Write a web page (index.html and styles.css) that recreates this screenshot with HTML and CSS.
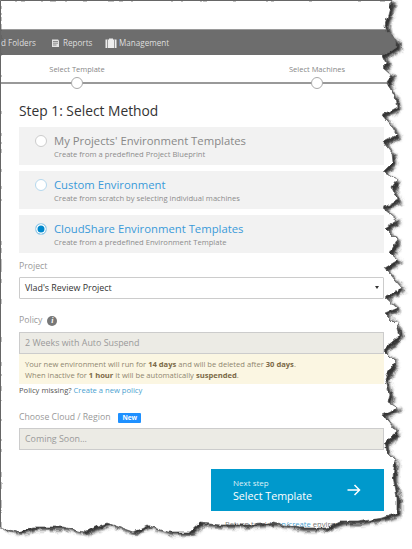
FILE: index.html
```html
<!DOCTYPE html>
<html lang="en">
<head>
<meta charset="utf-8">
<title>Select Method</title>
<link rel="stylesheet" href="styles.css">
</head>
<body>
<div class="page">
  <div class="topspace"></div>
  <nav class="nav">
    <span class="nav-item nav-first">d Folders</span>
    <span class="nav-item nav-reports">
      <svg class="ico" width="9" height="10" viewBox="0 0 9 10"><path d="M1 1.500h6l1 1v6.500h-7z" fill="#e4e4e4"/><path d="M2 3.500h5M2 5.200h5M2 7h3.500" stroke="#777" stroke-width=".8"/></svg>
      Reports
    </span>
    <span class="nav-item nav-mgmt">
      <svg class="ico" width="12" height="10" viewBox="0 0 12 10"><path d="M4 1.500v-1h4v1h3.500v8.500h-11v-8.500z" fill="#eee"/><path d="M2.500 1.500v8.500M9.500 1.500v8.500" stroke="#777" stroke-width=".7"/></svg>
      Management
    </span>
  </nav>
  <div class="steps">
    <div class="step step-one"><span class="step-label">Select Template</span><span class="dot"></span></div>
    <div class="step step-two"><span class="step-label">Select Machines</span><span class="dot"></span></div>
  </div>
  <main class="main">
    <h1 class="title">Step 1: Select Method</h1>

    <div class="card">
      <span class="radio radio-off"></span>
      <div><div class="card-title muted">My Projects' Environment Templates</div><div class="card-sub">Create from a predefined Project Blueprint</div></div>
    </div>
    <div class="card">
      <span class="radio radio-blue"></span>
      <div><div class="card-title">Custom Environment</div><div class="card-sub">Create from scratch by selecting individual machines</div></div>
    </div>
    <div class="card">
      <span class="radio radio-on"></span>
      <div><div class="card-title">CloudShare Environment Templates</div><div class="card-sub">Create from a predefined Environment Template</div></div>
    </div>

    <div class="label label-project">Project</div>
    <div class="field field-select">Vlad's Review Project<span class="caret"></span></div>

    <div class="label label-policy">Policy <span class="info">i</span></div>
    <div class="field field-off">2 Weeks with Auto Suspend</div>
    <div class="notice">
      <div>Your new environment will run for <b>14 days</b> and will be deleted after <b>30 days</b>.</div>
      <div>When inactive for <b>1 hour</b> it will be automatically <b>suspended</b>.</div>
    </div>
    <div class="missing">Policy missing? <a class="link">Create a new policy</a></div>

    <div class="label label-cloud">Choose Cloud / Region <span class="badge">New</span></div>
    <div class="field field-off">Coming Soon...</div>

    <div class="actions">
      <div class="next">
        <div><div class="next-small">Next step</div><div class="next-big">Select Template</div></div>
        <svg class="next-arrow" width="14" height="12" viewBox="0 0 14 12"><path d="M.5 6h12M7.500 1l5 5-5 5" fill="none" stroke="#fff" stroke-width="1.500"/></svg>
      </div>
    </div>
    <div class="return">Return to old <a class="link">run/create</a> environment</div>
  </main>

  <svg class="torn" width="412" height="549" viewBox="0 0 412 549" aria-hidden="true">
    <defs>
      <path id="paper" d="M0 0L392 0L388 15L385 25L387 32L392 36L397 40L397 47L390 52L383 55L387 63L383 67L392 75L387 82L391 90L395 97L397 107L382 115L393 128L397 135L383 142L392 153L393 162L383 172L397 180L392 187L398 200L383 208L397 220L385 228L397 240L390 253L398 260L385 268L395 280L402 288L385 297L397 308L385 313L397 325L400 335L383 350L395 362L385 378L390 395L388 402L398 408L383 415L397 432L385 443L387 452L395 460L393 477L397 497L397 513L383 518L357 522L340 522L327 528L300 528L273 523L247 525L220 525L200 523L190 532L167 532L147 525L133 532L107 523L83 532L63 527L33 527L17 532L0 527Z"/>
      <clipPath id="outside"><path clip-rule="evenodd" d="M0 0H440V570H0Z M0 0L392 0L388 15L385 25L387 32L392 36L397 40L397 47L390 52L383 55L387 63L383 67L392 75L387 82L391 90L395 97L397 107L382 115L393 128L397 135L383 142L392 153L393 162L383 172L397 180L392 187L398 200L383 208L397 220L385 228L397 240L390 253L398 260L385 268L395 280L402 288L385 297L397 308L385 313L397 325L400 335L383 350L395 362L385 378L390 395L388 402L398 408L383 415L397 432L385 443L387 452L395 460L393 477L397 497L397 513L383 518L357 522L340 522L327 528L300 528L273 523L247 525L220 525L200 523L190 532L167 532L147 525L133 532L107 523L83 532L63 527L33 527L17 532L0 527Z"/></clipPath>
      <filter id="blur" x="-5%" y="-5%" width="110%" height="110%"><feGaussianBlur stdDeviation="1.500"/></filter>
      <filter id="rough" filterUnits="userSpaceOnUse" x="0" y="0" width="412" height="549" color-interpolation-filters="sRGB">
        <feTurbulence type="fractalNoise" baseFrequency="0.16" numOctaves="2" seed="4" result="n"/>
        <feDisplacementMap in="SourceGraphic" in2="n" scale="5" xChannelSelector="R" yChannelSelector="G"/>
      </filter>
    </defs>
    <g filter="url(#rough)">
      <g clip-path="url(#outside)">
        <rect class="outside" width="440" height="570"/>
        <use href="#paper" class="shadow" filter="url(#blur)" transform="translate(4 3)"/>
      </g>
      <use href="#paper" class="edge"/>
    </g>
    <path class="frame" d="M.5 527V.5H392"/>
  </svg>
</div>
</body>
</html>
```

FILE: styles.css
```css
* { box-sizing: border-box; }
html, body { margin: 0; padding: 0; background: #fff; }
body { font-family: "Open Sans", "Liberation Sans", sans-serif; }
.page { position: relative; width: 412px; height: 549px; overflow: hidden; }

.topspace { height: 29px; }
.nav {
  height: 26px; background: #6d6d6d; border-top: 1px solid #9a9a9a;
  display: flex; align-items: center; color: #dedede; font-size: 8.100px; white-space: nowrap;
}
.nav-item { display: flex; align-items: center; }
.nav-first { margin-left: 1px; width: 50px; }
.nav-reports { width: 54px; gap: 3px; }
.nav-mgmt { gap: 2px; }

.steps { position: relative; height: 35px; display: flex; }
.steps::before { content: ""; position: absolute; left: 0; right: 0; top: 27px; height: 2px; background: #999; }
.step { position: relative; display: flex; flex-direction: column; align-items: center; width: 100px; }
.step-one { margin-left: 27px; }
.step-two { margin-left: 140px; }
.step-label { font-size: 7.500px; line-height: 11px; color: #888; margin-top: 9px; white-space: nowrap; }
.dot { width: 12px; height: 12px; margin-top: 2px; border: 1px solid #aaa; border-radius: 50%; background: #fff; position: relative; }

.main { padding: 0 28px 0 19px; }
.title { margin: 11px 0 0; height: 26px; font-size: 13.800px; line-height: 20px; font-weight: 400; color: #333; }

.card {
  height: 38px; margin-bottom: 6px; background: #f2f2f2;
  display: flex; gap: 7px; padding: 5px 0 0 16px;
}
.radio { flex: none; width: 12px; height: 12px; margin-top: 3px; border-radius: 50%; background: #fff; border: 1px solid #ccc; }
.radio-blue { border-color: #b5d8ee; }
.radio-on { border-color: #b5d8ee; background: #0088cc; box-shadow: inset 0 0 0 1.500px #fff; }
.card-title { font-size: 11.300px; line-height: 17px; color: #3a9ad9; white-space: nowrap; }
.card-title.muted { color: #888; }
.card-sub { font-size: 7.600px; line-height: 11px; color: #8c8c8c; white-space: nowrap; }

.label { font-size: 8.700px; line-height: 13px; color: #999; display: flex; align-items: center; }
.label-project { margin-top: 7px; height: 13px; margin-bottom: 4px; }
.label-policy { margin-top: 15px; margin-bottom: 5px; gap: 5px; }
.label-cloud { margin-top: 15px; margin-bottom: 4px; gap: 8px; }
.info {
  width: 10px; height: 10px; border-radius: 50%; background: #777; color: #fff;
  font: italic 700 8px/10px "Liberation Serif", serif; text-align: center;
}
.badge { background: #1e90ff; color: #fff; font-size: 6.500px; line-height: 10px; font-weight: 700; padding: 0 4px; border-radius: 1px; }

.field {
  position: relative; height: 22px; border: 1px solid #ccc; padding-left: 5px;
  font-size: 8.900px; line-height: 20px;
}
.field-select { background: #fff; color: #333; border-radius: 1px; }
.field-off { background: #ecebe5; color: #9a9a9a; }
.caret {
  position: absolute; right: 4px; top: 8px; width: 0; height: 0;
  border-left: 2px solid transparent; border-right: 2px solid transparent; border-top: 3.500px solid #333;
}
.notice {
  height: 30px; padding: 5px 6px 0; background: #fbf6e2; color: #8f8670;
  font-size: 7.600px; line-height: 11px; white-space: nowrap;
}
.notice b { color: #7b6a47; font-weight: 700; }
.missing { font-size: 7.600px; line-height: 12px; color: #555; }
.link { color: #4a9fd0; }

.actions { display: flex; justify-content: flex-end; margin-top: 19px; }
.next {
  width: 173px; height: 42px; background: #0099cc; color: #fff;
  display: flex; align-items: center; justify-content: space-between; padding: 0 23px 0 22px;
}
.next-small { font-size: 8px; line-height: 11px; color: #dff1f8; }
.next-big { font-size: 10.700px; line-height: 16px; }
.return { margin-top: 8px; padding-left: 206px; font-size: 7.600px; line-height: 11px; color: #777; white-space: nowrap; }

.torn { position: absolute; left: 0; top: 0; }
.outside { fill: #fff; }
.shadow { fill: #333; }
.edge { fill: none; stroke: #555; stroke-width: .7; }
.frame { fill: none; stroke: #666; stroke-width: 1; }
```
